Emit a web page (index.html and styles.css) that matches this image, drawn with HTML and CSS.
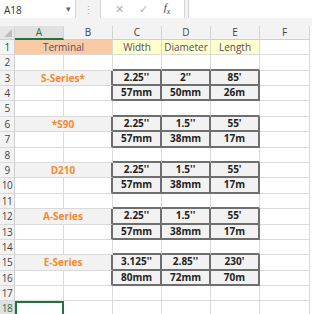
FILE: index.html
```html
<!DOCTYPE html>
<html lang="en">
<head>
  <meta charset="UTF-8" />
  <title>Terminal sizes</title>
  <link rel="stylesheet" href="styles.css">
</head>
<body>
  <div class="formula-bar">
    <div class="name-box">A18<span class="arrow">&#9662;</span></div>
    <div class="dots">&#8942;</div>
    <div class="fx-box">
      <span class="fx-btn">&#10005;</span>
      <span class="fx-btn">&#10003;</span>
      <span class="fx-btn fx">f<sub>x</sub></span>
    </div>
    <div class="input-box"></div>
  </div>

  <div class="sheet">
    <div class="corner"></div>
    <div class="col-head selected">A</div>
    <div class="col-head">B</div>
    <div class="col-head">C</div>
    <div class="col-head">D</div>
    <div class="col-head">E</div>
    <div class="col-head">F</div>

    <div class="row-head">1</div>
    <div class="cell span2 title">Terminal</div>
    <div class="cell label">Width</div>
    <div class="cell label">Diameter</div>
    <div class="cell label">Length</div>
    <div class="cell"></div>

    <div class="row-head">2</div>
    <div class="cell"></div><div class="cell"></div>
    <div class="cell above"></div><div class="cell above"></div><div class="cell above"></div>
    <div class="cell"></div>

    <div class="row-head">3</div>
    <div class="cell span2 name">S-Series*</div>
    <div class="cell val">2.25''</div><div class="cell val">2''</div><div class="cell val">85'</div>
    <div class="cell"></div>

    <div class="row-head">4</div>
    <div class="cell"></div><div class="cell left"></div>
    <div class="cell val">57mm</div><div class="cell val">50mm</div><div class="cell val">26m</div>
    <div class="cell"></div>

    <div class="row-head">5</div>
    <div class="cell"></div><div class="cell"></div>
    <div class="cell above"></div><div class="cell above"></div><div class="cell above"></div>
    <div class="cell"></div>

    <div class="row-head">6</div>
    <div class="cell span2 name">*S90</div>
    <div class="cell val">2.25''</div><div class="cell val">1.5''</div><div class="cell val">55'</div>
    <div class="cell"></div>

    <div class="row-head">7</div>
    <div class="cell"></div><div class="cell left"></div>
    <div class="cell val">57mm</div><div class="cell val">38mm</div><div class="cell val">17m</div>
    <div class="cell"></div>

    <div class="row-head">8</div>
    <div class="cell"></div><div class="cell"></div>
    <div class="cell above"></div><div class="cell above"></div><div class="cell above"></div>
    <div class="cell"></div>

    <div class="row-head">9</div>
    <div class="cell span2 name">D210</div>
    <div class="cell val">2.25''</div><div class="cell val">1.5''</div><div class="cell val">55'</div>
    <div class="cell"></div>

    <div class="row-head">10</div>
    <div class="cell"></div><div class="cell left"></div>
    <div class="cell val">57mm</div><div class="cell val">38mm</div><div class="cell val">17m</div>
    <div class="cell"></div>

    <div class="row-head">11</div>
    <div class="cell"></div><div class="cell"></div>
    <div class="cell above"></div><div class="cell above"></div><div class="cell above"></div>
    <div class="cell"></div>

    <div class="row-head">12</div>
    <div class="cell span2 name">A-Series</div>
    <div class="cell val">2.25''</div><div class="cell val">1.5''</div><div class="cell val">55'</div>
    <div class="cell"></div>

    <div class="row-head">13</div>
    <div class="cell"></div><div class="cell left"></div>
    <div class="cell val">57mm</div><div class="cell val">38mm</div><div class="cell val">17m</div>
    <div class="cell"></div>

    <div class="row-head">14</div>
    <div class="cell"></div><div class="cell"></div>
    <div class="cell above"></div><div class="cell above"></div><div class="cell above"></div>
    <div class="cell"></div>

    <div class="row-head">15</div>
    <div class="cell span2 name">E-Series</div>
    <div class="cell val">3.125''</div><div class="cell val">2.85''</div><div class="cell val">230'</div>
    <div class="cell"></div>

    <div class="row-head">16</div>
    <div class="cell"></div><div class="cell left"></div>
    <div class="cell val">80mm</div><div class="cell val">72mm</div><div class="cell val">70m</div>
    <div class="cell"></div>

    <div class="row-head">17</div>
    <div class="cell"></div><div class="cell"></div>
    <div class="cell"></div><div class="cell"></div><div class="cell"></div>
    <div class="cell"></div>

    <div class="row-head active">18</div>
    <div class="cell active-cell"></div><div class="cell"></div>
    <div class="cell"></div><div class="cell"></div><div class="cell"></div>
    <div class="cell"></div>
  </div>
</body>
</html>
```

FILE: styles.css
```css
* {
  box-sizing: border-box;
}
body {
  margin: 0;
  background: #fff;
  font-family: "Open Sans", "Liberation Sans", sans-serif;
  font-size: 10px;
  color: #222;
  overflow: hidden;
}
.formula-bar {
  display: flex;
  align-items: stretch;
  height: 26px;
  padding-bottom: 8px;
  background: #f3f3f3;
}
.name-box {
  position: relative;
  width: 76px;
  background: #fff;
  border-right: 1px solid #d4d4d4;
  padding: 3px 0 0 4px;
  font-size: 10px;
  color: #333;
}
.arrow {
  position: absolute;
  right: 4px;
  top: 2px;
  font-size: 9px;
  color: #666;
}
.dots {
  width: 24px;
  text-align: center;
  color: #aaa;
  font-size: 11px;
  padding-top: 2px;
}
.fx-box {
  display: flex;
  justify-content: space-around;
  width: 85px;
  background: #fff;
  border-right: 1px solid #d4d4d4;
  border-left: 1px solid #d4d4d4;
  padding: 1px 6px 0;
}
.fx-btn {
  color: #b0b0b0;
  font-size: 11px;
}
.fx {
  color: #444;
  font-family: "Liberation Serif", serif;
  font-style: italic;
  font-size: 11px;
}
.fx sub {
  font-size: 8px;
}
.input-box {
  flex: 1;
  margin-left: 3px;
  background: #fff;
  border-left: 1px solid #d4d4d4;
}
.sheet {
  display: grid;
  grid-template-columns: 15px 49px 49px 49px 49px 49px 50px;
  grid-template-rows: 14px 15px 16px 15px 15px 16px 15px 16px 15px 15px 16px 15px 16px 15px 15px 16px 15px 15px 15px;
}
.corner {
  background: #e6e6e6;
  border-right: 1px solid #d4d4d4;
  border-bottom: 1px solid #cfcfcf;
  position: relative;
}
.corner::after {
  content: "";
  position: absolute;
  right: 2px;
  bottom: 2px;
  border-style: solid;
  border-width: 0 0 8px 8px;
  border-color: transparent transparent #bdbdbd transparent;
}
.col-head {
  background: #f3f3f3;
  border-right: 1px solid #d4d4d4;
  border-bottom: 1px solid #cfcfcf;
  text-align: center;
  font-size: 10px;
  line-height: 13px;
  color: #444;
}
.col-head.selected {
  background: #e1e1e1;
  color: #217346;
  border-bottom: 2px solid #217346;
}
.row-head {
  background: #f3f3f3;
  border-right: 1px solid #cfcfcf;
  border-bottom: 1px solid #dadada;
  font-size: 10px;
  line-height: 14px;
  text-align: center;
  color: #444;
  letter-spacing: -0.5px;
}
.row-head.active {
  background: #e1e1e1;
  color: #217346;
}
.cell {
  border-right: 1px solid #dadada;
  border-bottom: 1px solid #dadada;
  text-align: center;
  line-height: 14px;
  white-space: nowrap;
}
.span2 {
  grid-column: span 2;
}
.title {
  background: #f8cba4;
  color: #564a6b;
  border-right-color: #d9d9d9;
}
.label {
  background: #ffffcc;
  color: #564a6b;
}
.name {
  background: #f2f2f2;
  color: #f58a2e;
  font-weight: bold;
  border-right: 2px solid #6e6e6e;
}
.left {
  border-right: 2px solid #6e6e6e;
}
.above {
  border-bottom: 2px solid #6e6e6e;
}
.val {
  background: #f2f2f2;
  font-weight: bold;
  color: #222;
  border-right: 2px solid #6e6e6e;
  border-bottom: 2px solid #6e6e6e;
  line-height: 13px;
}
.active-cell {
  border: 2px solid #217346;
}
```
